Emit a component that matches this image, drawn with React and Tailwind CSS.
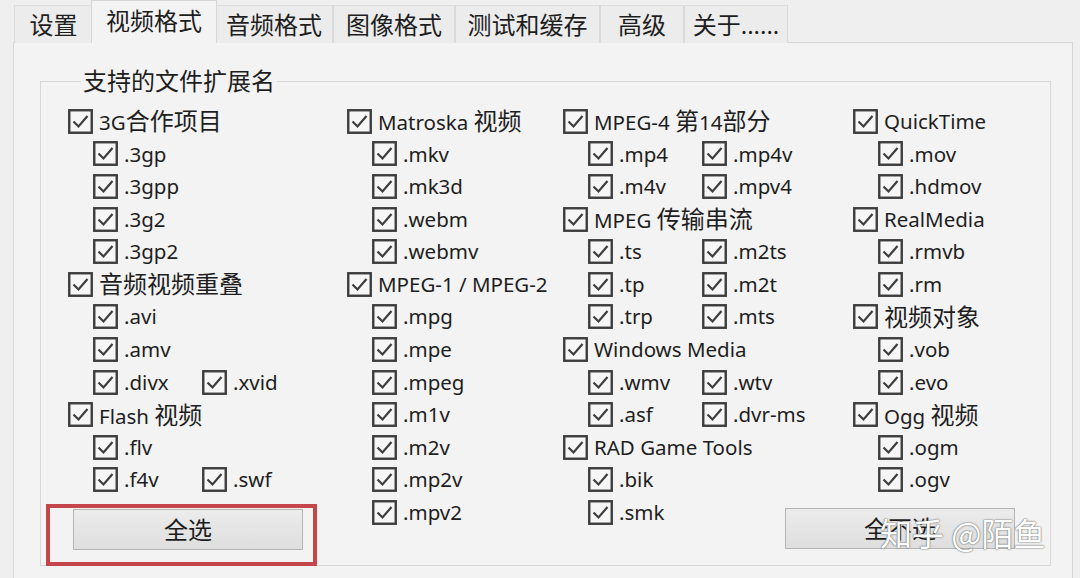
import React from 'react';

const CJK = /([\u3000-\u9fff\uff00-\uffef]+)/;

// split a label into latin / CJK runs so each can get its own size
const Label = ({ text, className = '' }) => (
  <span className={`whitespace-nowrap ${className}`}>
    {text.split(CJK).filter(Boolean).map((part, i) =>
      CJK.test(part) ? (
        <span key={i} className="text-[24px]">{part}</span>
      ) : (
        <span key={i}>{part}</span>
      )
    )}
  </span>
);

const Box = () => (
  <svg width="25" height="25" viewBox="0 0 25 25" className="shrink-0">
    <rect x="1.25" y="1.25" width="22.5" height="22.5" fill="#f6f6f6" stroke="#3d3d3d" strokeWidth="2.4" />
    <path d="M5.5 12.5 L10.5 17.5 L19.5 7" fill="none" stroke="#3d3d3d" strokeWidth="2.2" />
  </svg>
);

const Check = ({ label, width }) => (
  <div className="flex items-center gap-[6px]" style={width ? { width } : undefined}>
    <Box />
    <Label text={label} />
  </div>
);

const Row = ({ item, pairWidth }) => {
  const sub = item.sub;
  const labels = Array.isArray(item.label) ? item.label : [item.label];
  return (
    <div className={`flex items-center h-[32.6px] ${sub ? 'pl-[25px]' : ''}`}>
      {labels.map((l, i) => (
        <Check key={l} label={l} width={labels.length > 1 && i === 0 ? pairWidth : undefined} />
      ))}
    </div>
  );
};

const g = (label) => ({ label, sub: false });
const s = (label) => ({ label, sub: true });

const columns = [
  {
    width: 'w-[279px]',
    pair: 109,
    rows: [
      g('3G合作项目'), s('.3gp'), s('.3gpp'), s('.3g2'), s('.3gp2'),
      g('音频视频重叠'), s('.avi'), s('.amv'), s(['.divx', '.xvid']),
      g('Flash 视频'), s('.flv'), s(['.f4v', '.swf']),
    ],
    button: 'first',
  },
  {
    width: 'w-[216px]',
    pair: 109,
    rows: [
      g('Matroska 视频'), s('.mkv'), s('.mk3d'), s('.webm'), s('.webmv'),
      g('MPEG-1 / MPEG-2'), s('.mpg'), s('.mpe'), s('.mpeg'), s('.m1v'),
      s('.m2v'), s('.mp2v'), s('.mpv2'),
    ],
  },
  {
    width: 'w-[290px]',
    pair: 114,
    rows: [
      g('MPEG-4 第14部分'), s(['.mp4', '.mp4v']), s(['.m4v', '.mpv4']),
      g('MPEG 传输串流'), s(['.ts', '.m2ts']), s(['.tp', '.m2t']), s(['.trp', '.mts']),
      g('Windows Media'), s(['.wmv', '.wtv']), s(['.asf', '.dvr-ms']),
      g('RAD Game Tools'), s('.bik'), s('.smk'),
    ],
  },
  {
    width: 'flex-1',
    pair: 109,
    rows: [
      g('QuickTime'), s('.mov'), s('.hdmov'), g('RealMedia'), s('.rmvb'), s('.rm'),
      g('视频对象'), s('.vob'), s('.evo'), g('Ogg 视频'), s('.ogm'), s('.ogv'),
    ],
    button: 'last',
  },
];

const tabs = [
  { name: '设置', w: 'w-[79px]' },
  { name: '视频格式', w: 'w-[126px]', active: true },
  { name: '音频格式', w: 'w-[118px]' },
  { name: '图像格式', w: 'w-[122px]' },
  { name: '测试和缓存', w: 'w-[145px]' },
  { name: '高级', w: 'w-[84px]' },
  { name: '关于......', w: 'w-[104px]' },
];

const Button = ({ children }) => (
  <div className="w-[230px] h-[41px] flex items-center justify-center border border-[#b4b4b4] bg-[linear-gradient(#ececec,#dedede)] text-[24px] text-[#1c1c1c]">
    {children}
  </div>
);

export default function App() {
  return (
    <div className="relative w-[1080px] h-[578px] overflow-hidden bg-[#efefef] text-[#1e1e1e] text-[20.5px] font-['Noto_Sans','Noto_Sans_CJK_SC',sans-serif]">
      {/* tab strip */}
      <div className="flex items-end h-[43px] pl-[14px]">
        {tabs.map((t) =>
          t.active ? (
            <div
              key={t.name}
              className={`${t.w} -mx-[2px] h-[43px] relative z-10 flex items-center justify-center border border-b-0 border-[#d6d6d6] bg-[#f3f3f3] text-[24px] pb-[3px]`}
            >
              <Label text={t.name} />
            </div>
          ) : (
            <div
              key={t.name}
              className={`${t.w} h-[38px] flex items-center justify-center border border-b-0 border-[#dadada] bg-[#ececec] text-[24px]`}
            >
              <Label text={t.name} />
            </div>
          )
        )}
      </div>

      {/* page panel */}
      <div className="ml-[13px] w-[1060px] h-[560px] -mt-px border border-[#d6d6d6] bg-[#f3f3f3] pt-[23px] pl-[26px]">
        <fieldset className="w-[1011px] h-[500px] border border-[#d8d8d8] pl-[27px] pr-2">
          <legend className="ml-[13px] px-[2px] leading-[30px]">
            <Label text="支持的文件扩展名" />
          </legend>
          <div className="flex pt-[8px]">
            {columns.map((col, ci) => (
              <div key={ci} className={`${col.width} flex flex-col`}>
                {col.rows.map((r, ri) => (
                  <Row key={ri} item={r} pairWidth={col.pair} />
                ))}
                {col.button === 'first' && (
                  <div className="-ml-[22px] mt-[8px] w-[271px] border-4 border-[#c4464b] pt-px pl-[23px] pb-[12px]">
                    <Button>全选</Button>
                  </div>
                )}
                {col.button === 'last' && (
                  <div className="-ml-[68px] mt-[12px]">
                    <Button>全不选</Button>
                  </div>
                )}
              </div>
            ))}
          </div>
        </fieldset>
      </div>

      {/* site watermark */}
      <div className="absolute left-[880px] top-[512px] text-[32px] leading-[40px] text-white font-['Noto_Sans_CJK_SC',sans-serif] [text-shadow:0_0_2px_#6a6a6a,0_0_1px_#6a6a6a]">
        知乎 @陌鱼
      </div>
    </div>
  );
}
